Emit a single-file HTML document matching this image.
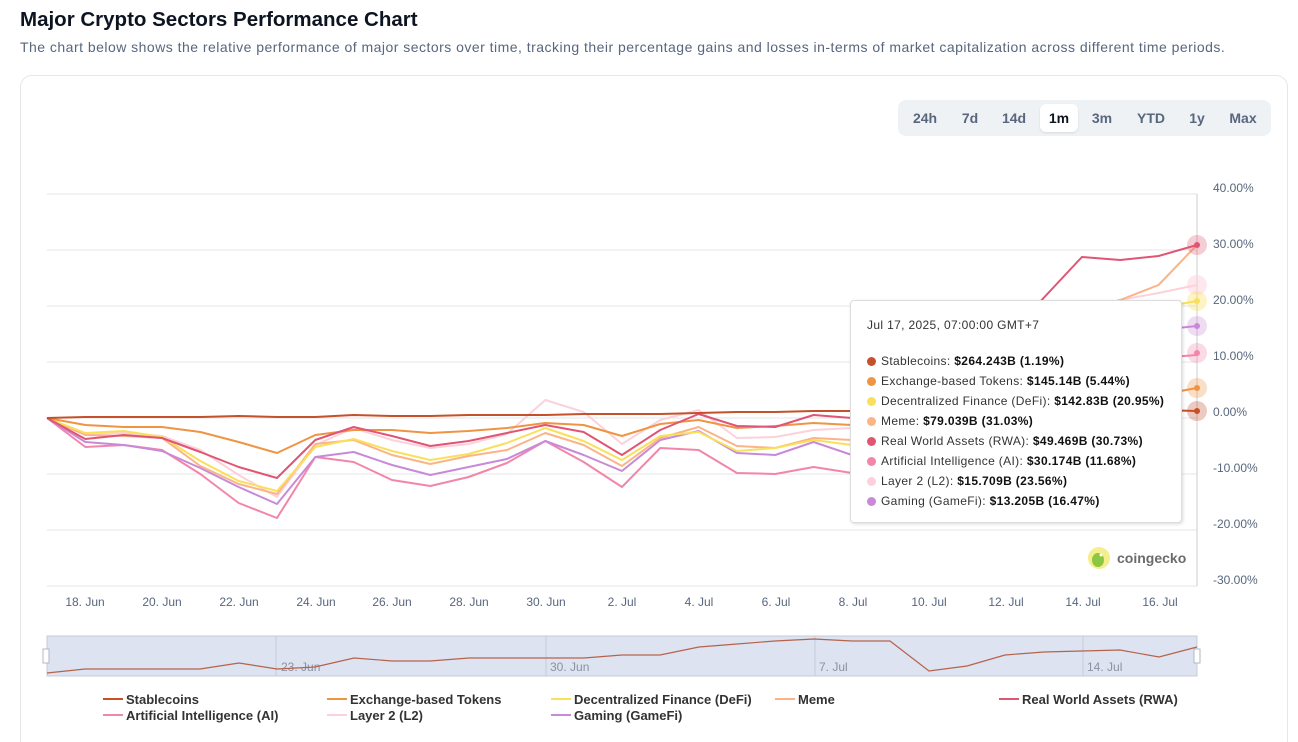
<!DOCTYPE html>
<html><head><meta charset="utf-8"><style>
*{margin:0;padding:0;box-sizing:border-box}
html,body{width:1298px;height:742px;overflow:hidden}
body{background:#fff;font-family:"Liberation Sans",sans-serif;color:#0d1421;position:relative}
h1{position:absolute;left:20px;top:8px;font-size:20.5px;font-weight:bold;color:#0d1421}
.sub{position:absolute;left:20px;top:39px;font-size:14px;letter-spacing:0.48px;color:#58667e;white-space:nowrap}
.card{position:absolute;left:20px;top:75px;width:1268px;height:700px;border:1px solid #e5e7eb;border-radius:12px}
.btns{position:absolute;left:898px;top:100px;width:373px;height:36px;background:#eff2f5;border-radius:8px}
.btns span{position:absolute;top:4px;height:28px;line-height:28px;font-size:14px;font-weight:bold;color:#58667e;text-align:center}
.btns .act{background:#fff;color:#0d1421;border-radius:6px;box-shadow:0 1px 2px rgba(0,0,0,.1)}
svg{position:absolute;left:0;top:0}
.tip{position:absolute;left:850px;top:300px;width:332px;height:223px;background:#fff;border:1px solid #ddd;border-radius:4px;box-shadow:1px 1px 3px rgba(0,0,0,.15);font-size:12px;letter-spacing:0.35px;color:#333}
.tip .h{position:absolute;left:16px;top:17px}
.tip .r{position:absolute;left:16px;white-space:nowrap}
.tip i{display:inline-block;width:9px;height:9px;border-radius:50%;margin-right:5px;vertical-align:-1px}
.tip b{color:#111}
.leg{position:absolute;font-size:13px;font-weight:bold;color:#333;white-space:nowrap}
.leg:before{content:"";display:inline-block;width:20px;height:2px;background:var(--c);vertical-align:4px;margin-right:3px}
</style></head><body>
<h1>Major Crypto Sectors Performance Chart</h1>
<div class="sub">The chart below shows the relative performance of major sectors over time, tracking their percentage gains and losses in-terms of market capitalization across different time periods.</div>
<div class="card"></div>
<div class="btns">
<span style="left:6px;width:42px">24h</span><span style="left:52px;width:40px">7d</span><span style="left:96px;width:40px">14d</span><span class="act" style="left:142px;width:38px">1m</span><span style="left:186px;width:36px">3m</span><span style="left:228px;width:50px">YTD</span><span style="left:282px;width:34px">1y</span><span style="left:322px;width:46px">Max</span>
</div>
<svg width="1298" height="742" font-family="Liberation Sans, sans-serif">
<g stroke="#e6e6e6" stroke-width="1">
<line x1="47" y1="194" x2="1197" y2="194"/><line x1="47" y1="250" x2="1197" y2="250"/><line x1="47" y1="306" x2="1197" y2="306"/><line x1="47" y1="362" x2="1197" y2="362"/><line x1="47" y1="418" x2="1197" y2="418"/><line x1="47" y1="474" x2="1197" y2="474"/><line x1="47" y1="530" x2="1197" y2="530"/><line x1="47" y1="586" x2="1197" y2="586"/>
</g>
<line x1="1197" y1="194" x2="1197" y2="586" stroke="#ccc"/>
<g font-size="12" fill="#58667e">
<text x="1213" y="192">40.00%</text><text x="1213" y="248">30.00%</text><text x="1213" y="304">20.00%</text><text x="1213" y="360">10.00%</text><text x="1213" y="416">0.00%</text><text x="1213" y="472">-10.00%</text><text x="1213" y="528">-20.00%</text><text x="1213" y="584">-30.00%</text>
</g>
<g font-size="12" fill="#58667e" text-anchor="middle">
<text x="85" y="606">18. Jun</text><text x="162" y="606">20. Jun</text><text x="239" y="606">22. Jun</text><text x="316" y="606">24. Jun</text><text x="392" y="606">26. Jun</text><text x="469" y="606">28. Jun</text><text x="546" y="606">30. Jun</text><text x="622" y="606">2. Jul</text><text x="699" y="606">4. Jul</text><text x="776" y="606">6. Jul</text><text x="853" y="606">8. Jul</text><text x="929" y="606">10. Jul</text><text x="1006" y="606">12. Jul</text><text x="1083" y="606">14. Jul</text><text x="1160" y="606">16. Jul</text>
</g>
<g transform="translate(47,0) scale(38.33,1)" fill="none" stroke-width="2" stroke-linejoin="round">
<polyline vector-effect="non-scaling-stroke" stroke="#fdd1dc" points="0,418 1,434 2,433 3,436 4,450 5,475 6,497 7,445 8,428 9,440 10,448 11,444 12,434 13,400 14,412 15,444 16,420 17,410 18,438 19,437 20,430 21,428 22,420 23,405 24,395 25,360 26,330 27,310 28,300 29,293 30,285"/>
<polyline vector-effect="non-scaling-stroke" stroke="#f286aa" points="0,418 1,447 2,445 3,450 4,474 5,503 6,518 7,457 8,462 9,480 10,486 11,477 12,463 13,441 14,462 15,487 16,448 17,450 18,473 19,474 20,467 21,473 22,470 23,460 24,440 25,400 26,380 27,370 28,362 29,358 30,355"/>
<polyline vector-effect="non-scaling-stroke" stroke="#c88ad7" points="0,418 1,442 2,445 3,451 4,468 5,487 6,504 7,457 8,452 9,465 10,475 11,467 12,459 13,441 14,455 15,471 16,440 17,431 18,453 19,455 20,442 21,455 22,440 23,420 24,390 25,370 26,355 27,345 28,338 29,330 30,326"/>
<polyline vector-effect="non-scaling-stroke" stroke="#fbb486" points="0,418 1,435 2,436 3,438 4,466 5,484 6,494 7,444 8,440 9,455 10,464 11,456 12,450 13,433 14,445 15,466 16,438 17,427 18,446 19,448 20,438 21,440 22,430 23,410 24,380 25,350 26,330 27,310 28,300 29,285 30,245"/>
<polyline vector-effect="non-scaling-stroke" stroke="#f9e05a" points="0,418 1,433 2,431 3,437 4,461 5,481 6,491 7,447 8,439 9,451 10,460 11,454 12,443 13,428 14,441 15,460 16,436 17,432 18,451 19,448 20,440 21,445 22,440 23,430 24,400 25,370 26,340 27,320 28,312 29,308 30,301"/>
<polyline vector-effect="non-scaling-stroke" stroke="#ef9443" points="0,418 1,425 2,427 3,427 4,432 5,442 6,453 7,435 8,430 9,430 10,433 11,431 12,428 13,423 14,425 15,436 16,424 17,420 18,428 19,426 20,423 21,425 22,425 23,420 24,418 25,415 26,410 27,405 28,400 29,395 30,388"/>
<polyline vector-effect="non-scaling-stroke" stroke="#e05574" points="0,418 1,439 2,435 3,438 4,452 5,467 6,478 7,440 8,427 9,436 10,446 11,441 12,433 13,425 14,432 15,455 16,430 17,414 18,426 19,427 20,415 21,418 22,420 23,410 24,395 25,340 26,298 27,257 28,260 29,256 30,245"/>
<polyline vector-effect="non-scaling-stroke" stroke="#c4512a" points="0,418 1,417 2,417 3,417 4,417 5,416 6,417 7,417 8,415 9,416 10,416 11,415 12,415 13,415 14,414 15,414 16,414 17,413 18,412 19,412 20,411 21,411 22,410 23,410 24,410 25,410 26,410 27,410 28,410 29,410 30,411"/>
</g>
<g>
<circle cx="1197" cy="245" r="10" fill="#e05574" opacity=".3"/><circle cx="1197" cy="245" r="3" fill="#e05574"/>
<circle cx="1197" cy="285" r="10" fill="#fdd1dc" opacity=".5"/>
<circle cx="1197" cy="301" r="10" fill="#f9e05a" opacity=".35"/><circle cx="1197" cy="301" r="3" fill="#f9e05a"/>
<circle cx="1197" cy="326" r="10" fill="#c88ad7" opacity=".3"/><circle cx="1197" cy="326" r="3" fill="#c88ad7"/>
<circle cx="1197" cy="353" r="10" fill="#f286aa" opacity=".3"/><circle cx="1197" cy="353" r="3" fill="#f286aa"/>
<circle cx="1197" cy="388" r="10" fill="#ef9443" opacity=".3"/><circle cx="1197" cy="388" r="3" fill="#ef9443"/>
<circle cx="1197" cy="411" r="10" fill="#c4512a" opacity=".3"/><circle cx="1197" cy="411" r="3" fill="#c4512a"/>
</g>
<circle cx="1099" cy="558" r="11" fill="#f4ee8c"/><ellipse cx="1098" cy="560" rx="6" ry="7" fill="#8dc63f"/><circle cx="1101" cy="555" r="1.5" fill="#fff"/>
<text x="1117" y="563" font-size="14" font-weight="bold" fill="#6b6b6b">coingecko</text>
<rect x="47" y="636" width="1150" height="40" fill="#dde3f0" stroke="#c5cbd8"/>
<g stroke="#c5cbd8"><line x1="276" y1="636" x2="276" y2="676"/><line x1="546" y1="636" x2="546" y2="676"/><line x1="815" y1="636" x2="815" y2="676"/><line x1="1083" y1="636" x2="1083" y2="676"/></g>
<g font-size="12" fill="#8a92a3"><text x="281" y="671">23. Jun</text><text x="550" y="671">30. Jun</text><text x="819" y="671">7. Jul</text><text x="1087" y="671">14. Jul</text></g>
<path d="M47,673 L85,669 L124,669 L162,669 L200,669 L239,663 L277,669 L315,667 L354,658 L392,661 L430,661 L469,658 L507,658 L545,658 L584,658 L622,655 L660,655 L699,647 L737,644 L775,641 L814,639 L852,641 L890,641 L929,671 L967,666 L1005,655 L1044,652 L1082,651 L1120,650 L1159,657 L1197,647" fill="none" stroke="#b5634b" stroke-width="1.2"/>
<rect x="43" y="649" width="6" height="14" fill="#fff" stroke="#b0b7c6"/><rect x="1194" y="649" width="6" height="14" fill="#fff" stroke="#b0b7c6"/>
</svg>
<div class="tip">
<div class="h">Jul 17, 2025, 07:00:00 GMT+7</div>
<div class="r" style="top:53px"><i style="background:#c4512a"></i>Stablecoins: <b>$264.243B (1.19%)</b></div>
<div class="r" style="top:73px"><i style="background:#ef9443"></i>Exchange-based Tokens: <b>$145.14B (5.44%)</b></div>
<div class="r" style="top:93px"><i style="background:#f9e05a"></i>Decentralized Finance (DeFi): <b>$142.83B (20.95%)</b></div>
<div class="r" style="top:113px"><i style="background:#fbb486"></i>Meme: <b>$79.039B (31.03%)</b></div>
<div class="r" style="top:133px"><i style="background:#e05574"></i>Real World Assets (RWA): <b>$49.469B (30.73%)</b></div>
<div class="r" style="top:153px"><i style="background:#f286aa"></i>Artificial Intelligence (AI): <b>$30.174B (11.68%)</b></div>
<div class="r" style="top:173px"><i style="background:#fdd1dc"></i>Layer 2 (L2): <b>$15.709B (23.56%)</b></div>
<div class="r" style="top:193px"><i style="background:#c88ad7"></i>Gaming (GameFi): <b>$13.205B (16.47%)</b></div>
</div>
<div class="leg" style="left:103px;top:692px;--c:#c4512a">Stablecoins</div>
<div class="leg" style="left:327px;top:692px;--c:#ef9443">Exchange-based Tokens</div>
<div class="leg" style="left:551px;top:692px;--c:#f9e05a">Decentralized Finance (DeFi)</div>
<div class="leg" style="left:775px;top:692px;--c:#fbb486">Meme</div>
<div class="leg" style="left:999px;top:692px;--c:#e05574">Real World Assets (RWA)</div>
<div class="leg" style="left:103px;top:708px;--c:#f286aa">Artificial Intelligence (AI)</div>
<div class="leg" style="left:327px;top:708px;--c:#fdd1dc">Layer 2 (L2)</div>
<div class="leg" style="left:551px;top:708px;--c:#c88ad7">Gaming (GameFi)</div>
</body></html>
